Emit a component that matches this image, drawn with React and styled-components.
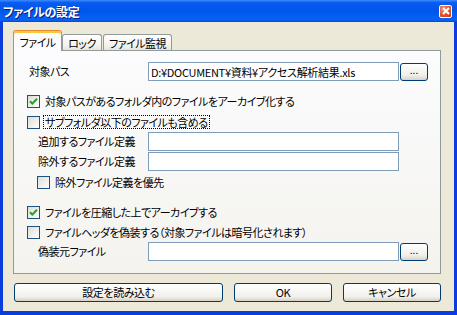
import * as React from "react";
import styled, { createGlobalStyle } from "styled-components";

const FONT = `"Noto Sans CJK JP", "Noto Sans", sans-serif`;

const GlobalStyle = createGlobalStyle`
  html, body {
    margin: 0;
    padding: 0;
    background: #ece9d8;
  }
  body {
    font-family: ${FONT};
    font-size: 11px;
    letter-spacing: -0.5px;
    font-feature-settings: "palt";
    color: #000;
  }
`;

function CheckMark() {
  return (
    <svg width="11" height="11" viewBox="0 0 11 11">
      <path d="M2 5.2 L4.3 7.6 L9 2.8" fill="none" stroke="#21a121" strokeWidth="2" />
    </svg>
  );
}

function CheckOption({ checked, focused, indent, children }) {
  return (
    <CheckRow $indent={indent}>
      <CheckBox>{checked && <CheckMark />}</CheckBox>
      <CheckLabel $focused={focused}>{children}</CheckLabel>
    </CheckRow>
  );
}

function Field({ label, indent, value, browse }) {
  return (
    <FieldRow>
      <FieldLabel $indent={indent}>{label}</FieldLabel>
      <TextBox readOnly value={value || ""} />
      {browse && <BrowseButton>...</BrowseButton>}
    </FieldRow>
  );
}

export default function App() {
  return (
    <>
      <GlobalStyle />
      <Window>
        <TitleBar>
          <Title>ファイルの設定</Title>
          <CloseButton>
            <svg width="8" height="8" viewBox="0 0 8 8">
              <path d="M1 1 L7 7 M7 1 L1 7" stroke="#fff" strokeWidth="1.8" />
            </svg>
          </CloseButton>
        </TitleBar>

        <Body>
          <TabStrip>
            <Tab $active $width={49}>ファイル</Tab>
            <Tab $width={40}>ロック</Tab>
            <Tab $width={69} $gap={1}>ファイル監視</Tab>
          </TabStrip>

          <Panel>
            <Field
              label="対象パス"
              indent={15}
              value="D:¥DOCUMENT¥資料¥アクセス解析結果.xls"
              browse
            />
            <Spacer $h={9} />
            <CheckOption checked indent={13}>
              対象パスがあるフォルダ内のファイルをアーカイブ化する
            </CheckOption>
            <Spacer $h={1} />
            <CheckOption focused indent={13}>
              サブフォルダ以下のファイルも含める
            </CheckOption>
            <Field label="追加するファイル定義" indent={24} />
            <Field label="除外するファイル定義" indent={24} />
            <CheckOption indent={23}>除外ファイル定義を優先</CheckOption>
            <Spacer $h={10} />
            <CheckOption checked indent={13}>
              ファイルを圧縮した上でアーカイブする
            </CheckOption>
            <CheckOption indent={13}>
              ファイルヘッダを偽装する（対象ファイルは暗号化されます）
            </CheckOption>
            <Field label="偽装元ファイル" indent={24} browse />
          </Panel>

          <ButtonBar>
            <PushButton $width={209}>設定を読み込む</PushButton>
            <PushButton $width={98}>OK</PushButton>
            <PushButton $width={98}>キャンセル</PushButton>
          </ButtonBar>
        </Body>
      </Window>
    </>
  );
}

/* =============================== */
// styles

const Window = styled.div`
  width: 457px;
  height: 315px;
  display: flex;
  flex-direction: column;
  overflow: hidden;
`;

const TitleBar = styled.div`
  height: 22px;
  flex: none;
  display: flex;
  align-items: center;
  justify-content: space-between;
  padding: 0 5px 0 3px;
  box-sizing: border-box;
  background: linear-gradient(
    to bottom,
    #3d8bff 0%,
    #0a5cf0 12%,
    #0055ea 45%,
    #0562f5 85%,
    #0a5ff0 92%,
    #0046d8 100%
  );
`;

const Title = styled.span`
  color: #fff;
  font-weight: bold;
  font-size: 12px;
  letter-spacing: -0.3px;
  line-height: 14px;
  text-shadow: 1px 1px 0 #0a1883;
  padding-top: 1px;
`;

const CloseButton = styled.div`
  width: 13px;
  height: 13px;
  box-sizing: border-box;
  border: 1px solid #fff;
  border-radius: 2px;
  display: flex;
  align-items: center;
  justify-content: center;
  background: radial-gradient(circle at 35% 30%, #f09a7c 0%, #e0522d 55%, #c33a17 100%);
`;

const Body = styled.div`
  flex: 1;
  display: flex;
  flex-direction: column;
  background: #ece9d8;
  border: solid #0b3cdc;
  border-width: 0 3px 4px 3px;
  padding: 8px 0 0 10px;
`;

const TabStrip = styled.div`
  display: flex;
  align-items: flex-end;
  height: 20px;
  position: relative;
  z-index: 1;
`;

const Tab = styled.div`
  width: ${(p) => p.$width}px;
  margin-left: ${(p) => p.$gap || 0}px;
  height: ${(p) => (p.$active ? 21 : 16)}px;
  margin-bottom: ${(p) => (p.$active ? -1 : 0)}px;
  box-sizing: border-box;
  display: flex;
  align-items: center;
  justify-content: center;
  border: 1px solid #919b9c;
  border-bottom: none;
  border-radius: 3px 3px 0 0;
  line-height: 14px;
  ${(p) =>
    p.$active
      ? `
    border-top: 1px solid #e68b2c;
    box-shadow: inset 0 2px 0 #ffc83c;
    background: #fcfcfe;
    padding-top: 2px;
  `
      : `
    background: linear-gradient(to bottom, #ffffff, #f3f2ec 70%, #e6e4dc);
  `}
`;

const Panel = styled.div`
  width: 428px;
  height: 224px;
  box-sizing: border-box;
  border: 1px solid #919b9c;
  background: linear-gradient(to bottom, #fcfcfe, #f4f3ee);
  padding-top: 11px;
  display: flex;
  flex-direction: column;
`;

const Spacer = styled.div`
  height: ${(p) => p.$h}px;
  flex: none;
`;

const FieldRow = styled.div`
  display: grid;
  grid-template-columns: 133px 251px 28px;
  column-gap: 1px;
  height: 20px;
  align-items: start;
  flex: none;
`;

const FieldLabel = styled.span`
  padding-left: ${(p) => p.$indent}px;
  line-height: 19px;
  white-space: nowrap;
`;

const TextBox = styled.input`
  width: 251px;
  height: 19px;
  box-sizing: border-box;
  border: 1px solid #7f9db9;
  background: #fff;
  padding: 0 2px;
  margin: 0;
  font-family: ${FONT};
  font-feature-settings: "palt";
  font-size: 11px;
  letter-spacing: -0.3px;
  color: #000;
  outline: none;
`;

const BrowseButton = styled.button`
  width: 28px;
  height: 18px;
  margin: 1px 0 0 0;
  padding: 0 0 4px;
  box-sizing: border-box;
  border: 1px solid #003c74;
  border-radius: 3px;
  background: linear-gradient(to bottom, #ffffff, #f0efea 70%, #d8d3c8);
  font-family: ${FONT};
  font-size: 10px;
  line-height: 10px;
  color: #000;
`;

const CheckRow = styled.div`
  display: flex;
  align-items: center;
  height: 20px;
  padding-left: ${(p) => p.$indent}px;
  flex: none;
`;

const CheckBox = styled.div`
  width: 13px;
  height: 13px;
  flex: none;
  box-sizing: border-box;
  border: 1px solid #1c5180;
  background: linear-gradient(135deg, #dcdcd7, #ffffff);
  display: flex;
  align-items: center;
  justify-content: center;
`;

const CheckLabel = styled.span`
  margin-left: 3px;
  padding: 0 1px;
  line-height: 12px;
  border: 1px dotted ${(p) => (p.$focused ? "#000" : "transparent")};
  white-space: nowrap;
`;

const ButtonBar = styled.div`
  display: flex;
  gap: 11px;
  margin-top: 9px;
  padding-left: 1px;
`;

const PushButton = styled.button`
  width: ${(p) => p.$width}px;
  height: 19px;
  box-sizing: border-box;
  margin: 0;
  padding: 0;
  border: 1px solid #003c74;
  border-radius: 3px;
  background: linear-gradient(to bottom, #ffffff, #f1f0eb 75%, #d6d0c5);
  font-family: ${FONT};
  font-feature-settings: "palt";
  font-size: 11px;
  letter-spacing: -0.4px;
  line-height: 15px;
  color: #000;
`;
